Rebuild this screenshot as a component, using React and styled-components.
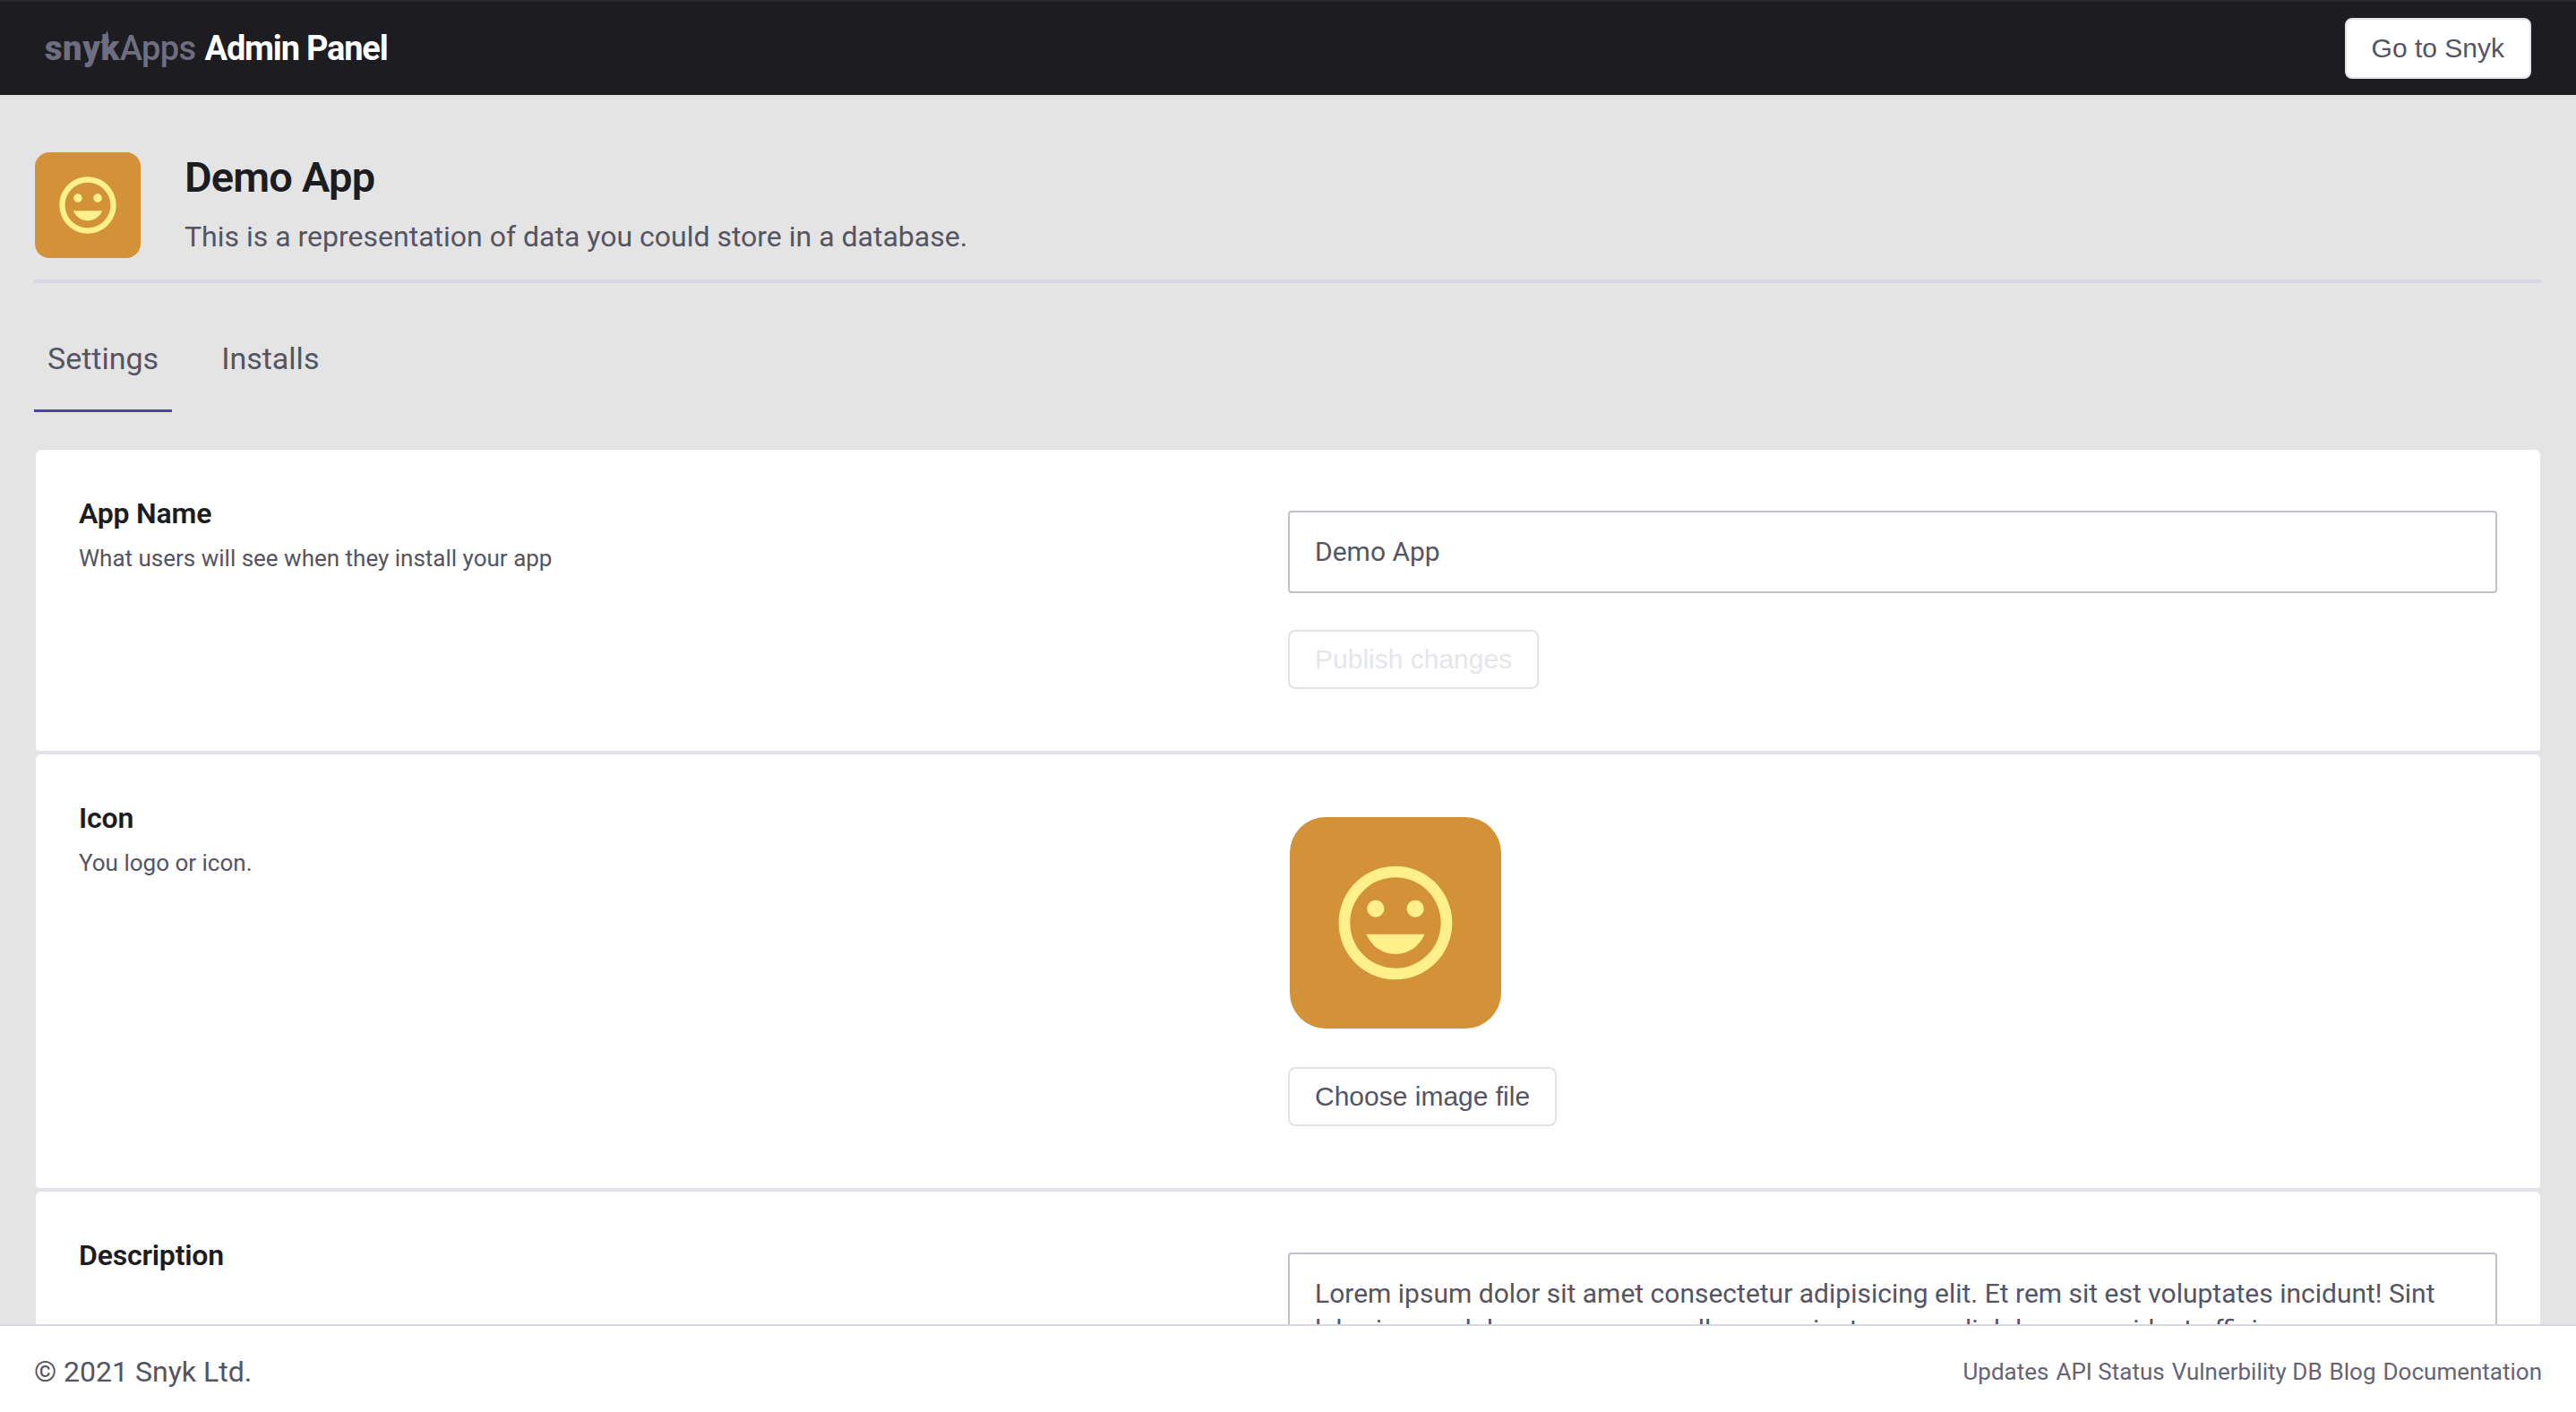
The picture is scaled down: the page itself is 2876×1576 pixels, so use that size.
import React from 'react';
import styled, { createGlobalStyle } from 'styled-components';

const GlobalStyle = createGlobalStyle`
  html, body { margin: 0; padding: 0; height: 100%; }
  body { font-family: Roboto, sans-serif; background: #e4e4e4; color: #555463; }
  * { box-sizing: border-box; }
`;

const Page = styled.div`
  height: 100vh;
  display: flex;
  flex-direction: column;
  overflow: hidden;
`;

const TopBar = styled.header`
  flex: none;
  height: 106px;
  padding: 0 50px;
  background: #1c1c21;
  border-top: 2px solid #28282c;
  display: flex;
  align-items: center;
  justify-content: space-between;
`;

const Brand = styled.div`
  display: flex;
  align-items: baseline;
  font-size: 38px;
`;

const SnykWord = styled.span`
  position: relative;
  font-weight: 900;
  letter-spacing: 0.6px;
  color: #6f6e80;
`;

const Spike = styled.svg`
  position: absolute;
  left: 62px;
  top: 2px;
  width: 10px;
  height: 14px;
`;

const AppsWord = styled.span`
  font-weight: 500;
  letter-spacing: -0.6px;
  color: #6f6e80;
  margin-right: 10px;
`;

const AdminWord = styled.span`
  font-weight: 700;
  letter-spacing: -1.2px;
  color: #fff;
`;

const Button = styled.button`
  display: block;
  height: ${p => p.$height || 66}px;
  margin-top: ${p => p.$top || 0}px;
  padding: 0 28px;
  background: #fff;
  border: 2px solid #e4e4e8;
  border-radius: 8px;
  font-family: "Liberation Sans", Arial, sans-serif;
  font-size: 30px;
  color: ${p => (p.disabled ? '#e6e6ea' : '#555463')};
`;

const Main = styled.main`
  flex: 1;
  min-height: 0;
  overflow: hidden;
  padding: 64px 38px 0;
`;

const AppHeader = styled.section`
  display: flex;
  gap: 49px;
  padding-bottom: 24px;
  border-bottom: 4px solid #d7d7e2;
`;

const IconTile = styled.div`
  flex: none;
  width: ${p => p.$size}px;
  height: ${p => p.$size}px;
  margin-top: ${p => p.$top || 0}px;
  margin-left: ${p => p.$inset || 0}px;
  border-radius: ${p => p.$radius}px;
  background: #d39138;
  display: flex;
  align-items: center;
  justify-content: center;
`;

const AppText = styled.div`
  display: flex;
  flex-direction: column;
`;

const AppTitle = styled.h1`
  margin: -2px 0 0;
  font-size: 47px;
  line-height: 60px;
  font-weight: 600;
  letter-spacing: -0.8px;
  color: #1c1c21;
`;

const AppSubtitle = styled.p`
  margin: 16px 0 0;
  font-size: 32px;
  line-height: 40px;
  color: #555463;
`;

const Tabs = styled.nav`
  display: flex;
  gap: 4px;
  margin-top: 2px;
`;

const Tab = styled.a`
  padding: 62px 15px 0;
  height: 142px;
  line-height: 40px;
  font-size: 34px;
  color: #555463;
  border-bottom: 3px solid ${p => (p.$active ? '#4b45a9' : 'transparent')};
  margin-right: 36px;
`;

const Cards = styled.div`
  margin: 42px 2px 0;
  display: flex;
  flex-direction: column;
`;

const Card = styled.section`
  background: #fff;
  border-radius: 6px;
  border-bottom: 4px solid #e2e2ea;
  padding: 49px 48px 0;
  height: ${p => p.$height}px;
  flex: none;
  display: grid;
  grid-template-columns: 1fr 1fr;
`;

const FieldTitle = styled.h2`
  margin: 0;
  font-size: 32px;
  line-height: 44px;
  font-weight: 600;
  letter-spacing: -0.2px;
  color: #1c1c21;
`;

const FieldHint = styled.p`
  margin: 8px 0 0;
  font-size: 26px;
  line-height: 40px;
  color: #555463;
`;

const Field = styled.div`
  display: flex;
  flex-direction: column;
  align-items: flex-start;
  padding-top: 19px;
`;

const TextInput = styled.input`
  display: block;
  width: 100%;
  height: 92px;
  margin-bottom: 41px;
  padding: 0 28px 2px;
  border: 2px solid #c0c0c8;
  border-radius: 4px;
  font-family: Roboto, sans-serif;
  font-size: 30px;
  color: #555463;
  background: #fff;
`;

const TextArea = styled.textarea`
  display: block;
  width: 100%;
  height: 220px;
  padding: 24px 28px;
  border: 2px solid #c0c0c8;
  border-radius: 4px;
  resize: none;
  font-family: Roboto, sans-serif;
  font-size: 30px;
  line-height: 40px;
  color: #555463;
  background: #fff;
`;

const Footer = styled.footer`
  flex: none;
  height: 98px;
  padding: 6px 38px 0;
  background: #fff;
  border-top: 2px solid #d7d7e2;
  display: flex;
  align-items: center;
  justify-content: space-between;
`;

const Copyright = styled.span`
  font-size: 32px;
  color: #555463;
`;

const FooterLinks = styled.div`
  display: flex;
  gap: 8px;
`;

const FooterLink = styled.a`
  font-size: 26px;
  color: #656476;
`;

const Smile = ({ size }) => (
  <svg width={size} height={size} viewBox="0 0 24 24" fill="#fff08c">
    <path d="M11.99 2C6.47 2 2 6.48 2 12s4.47 10 9.99 10C17.52 22 22 17.52 22 12S17.52 2 11.99 2zM12 20c-4.42 0-8-3.58-8-8s3.58-8 8-8 8 3.58 8 8-3.58 8-8 8zm3.5-9c.83 0 1.5-.67 1.5-1.5S16.33 8 15.5 8 14 8.67 14 9.5s.67 1.5 1.5 1.5zm-7 0c.83 0 1.5-.67 1.5-1.5S9.33 8 8.5 8 7 8.67 7 9.5 7.67 11 8.5 11zm3.5 6.5c2.33 0 4.31-1.46 5.11-3.5H6.89c.8 2.04 2.78 3.5 5.11 3.5z" />
  </svg>
);

const footerLinks = ['Updates', 'API Status', 'Vulnerbility DB', 'Blog', 'Documentation'];

const description =
  'Lorem ipsum dolor sit amet consectetur adipisicing elit. Et rem sit est voluptates incidunt! Sint laboriosam dolore accusamus ullam nesciunt commodi dolores provident officia earum.';

const App = () => {
  return (
    <Page>
      <GlobalStyle />
      <TopBar>
        <Brand>
          <SnykWord>
            snyk
            <Spike viewBox="0 0 10 14">
              <path d="M8 0 L10 14 L0 14 Z" fill="#6f6e80" />
            </Spike>
          </SnykWord>
          <AppsWord>Apps</AppsWord>
          <AdminWord>Admin Panel</AdminWord>
        </Brand>
        <Button $height={68}>Go to Snyk</Button>
      </TopBar>
      <Main>
        <AppHeader>
          <IconTile $size={118} $radius={16} $inset={1}>
            <Smile size={76} />
          </IconTile>
          <AppText>
            <AppTitle>Demo App</AppTitle>
            <AppSubtitle>This is a representation of data you could store in a database.</AppSubtitle>
          </AppText>
        </AppHeader>
        <Tabs>
          <Tab $active>Settings</Tab>
          <Tab>Installs</Tab>
        </Tabs>
        <Cards>
          <Card $height={340}>
            <div>
              <FieldTitle>App Name</FieldTitle>
              <FieldHint>What users will see when they install your app</FieldHint>
            </div>
            <Field>
              <TextInput defaultValue="Demo App" />
              <Button disabled>Publish changes</Button>
            </Field>
          </Card>
          <Card $height={488}>
            <div>
              <FieldTitle>Icon</FieldTitle>
              <FieldHint>You logo or icon.</FieldHint>
            </div>
            <Field>
              <IconTile $size={236} $radius={40} $inset={2} $top={2}>
                <Smile size={152} />
              </IconTile>
              <Button $top={43}>Choose image file</Button>
            </Field>
          </Card>
          <Card $height={400}>
            <div>
              <FieldTitle>Description</FieldTitle>
            </div>
            <Field>
              <TextArea defaultValue={description} />
            </Field>
          </Card>
        </Cards>
      </Main>
      <Footer>
        <Copyright>© 2021 Snyk Ltd.</Copyright>
        <FooterLinks>
          {footerLinks.map(link => (
            <FooterLink key={link}>{link}</FooterLink>
          ))}
        </FooterLinks>
      </Footer>
    </Page>
  );
};

export default App;
